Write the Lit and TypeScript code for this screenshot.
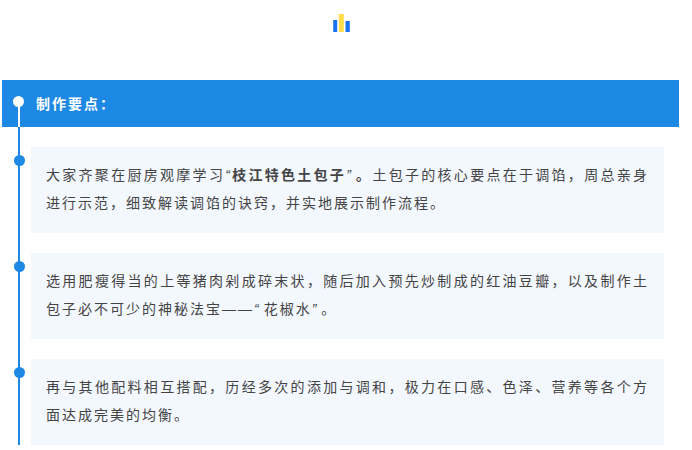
import { LitElement, html, css } from "lit";
import { customElement } from "lit/decorators.js";

@customElement("app-root")
export class AppRoot extends LitElement {
  static styles = css`
    :host {
      display: block;
      width: 692px;
      height: 450px;
      overflow: hidden;
      background: #fff;
      font-family: "Liberation Sans", "Noto Sans CJK SC", sans-serif;
    }
    .logo {
      display: flex;
      justify-content: center;
      height: 80px;
      box-sizing: border-box;
    }
    .logo svg { display: block; margin-top: 14px; margin-left: -9px; }
    .main { margin-left: 2px; width: 677px; }
    .head {
      display: flex;
      align-items: center;
      height: 47px;
      background: #1e88e5;
      color: #fff;
      font-size: 14px;
      font-weight: 700;
      letter-spacing: 2px;
    }
    .head .rail { align-self: stretch; }
    .rail {
      position: relative;
      flex: none;
      width: 29px;
      display: flex;
      justify-content: center;
    }
    .line { width: 2px; margin-left: 5px; background: #1e88e5; }
    .head .line { background: #fff; margin-top: 21px; margin-left: 4px; }
    .dot {
      position: absolute;
      left: 12px;
      top: 8px;
      width: 11px;
      height: 11px;
      border-radius: 50%;
      background: #1e88e5;
    }
    .head .dot { background: #fff; top: 15.5px; left: 10.5px; width: 11.5px; height: 11.5px; }
    .head span { margin: 0 0 2px 5px; }
    .row { display: flex; padding-top: 20px; }
    .row .rail { margin-top: -20px; }
    .row .dot { top: 28px; }
    .card {
      flex: 1;
      margin-right: 15px;
      height: 86px;
      box-sizing: border-box;
      padding: 14px 15px;
      background: #f3f7fe;
      color: #444;
      font-size: 14px;
      line-height: 28px;
      letter-spacing: 2px;
      text-align: justify;
    }
    .q { font-style: italic; }
    .w { letter-spacing: 5px; }
  `;

  render() {
    return html`
      <div class="logo">
        <svg width="18" height="18" viewBox="0 0 18 18" aria-hidden="true">
          <rect x="0.2" y="6" width="4" height="12" fill="#1a73f0"></rect>
          <rect x="5.8" y="0" width="5" height="18" fill="#ffdd4a"></rect>
          <rect x="12.5" y="7" width="4.3" height="11" fill="#1a73f0"></rect>
        </svg>
      </div>
      <div class="main">
        <div class="head">
          <div class="rail"><div class="line"></div><div class="dot"></div></div>
          <span>制作要点：</span>
        </div>
        <div class="row">
          <div class="rail"><div class="line"></div><div class="dot"></div></div>
          <div class="card">大家齐聚在厨房观摩学习<span class="q">“</span><b>枝江特色土包子</b><span class="q w">”</span><b>。</b>土包子的核心要点在于调馅，周总亲身进行示范，细致解读调馅的诀窍，并实地展示制作流程。</div>
        </div>
        <div class="row">
          <div class="rail"><div class="line"></div><div class="dot"></div></div>
          <div class="card">选用肥瘦得当的上等猪肉剁成碎末状，随后加入预先炒制成的红油豆瓣，以及制作土包子必不可少的神秘法宝——<span class="q w">“</span>花椒水<span class="q w">”</span>。</div>
        </div>
        <div class="row">
          <div class="rail"><div class="line"></div><div class="dot"></div></div>
          <div class="card">再与其他配料相互搭配，历经多次的添加与调和，极力在口感、色泽、营养等各个方面达成完美的均衡。</div>
        </div>
      </div>
    `;
  }
}
